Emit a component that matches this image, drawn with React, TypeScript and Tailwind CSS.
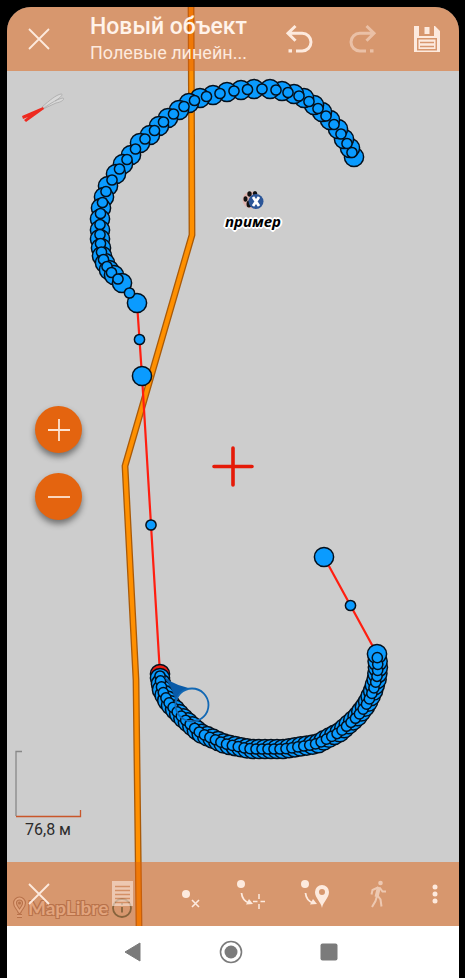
type Point = [number, number];

const UPPER_TRACK: Point[] = [
  [354, 157], [350, 148], [344, 139], [338, 129], [330, 120], [322, 112],
  [314, 105], [304, 98], [294, 94], [282, 91], [270, 89], [254, 89],
  [241, 90], [227, 92], [213, 95], [200, 98], [189, 103], [179, 110],
  [168, 118], [159, 126], [150, 135], [140, 143], [131, 155], [123, 164],
  [116, 174], [108, 186], [104, 197], [101, 208], [100, 219], [100, 230],
  [100, 239], [101, 248], [102, 256], [105, 263], [109, 270], [114, 275],
  [122, 283], [137, 303], [142, 376],
];

const LOWER_CURVE: Point[] = [
  [160, 678], [162, 690], [168, 702], [182, 717], [200, 733], [225, 744],
  [250, 749], [284, 749], [317, 744], [340, 732], [357, 717], [367, 704],
  [373, 691], [377, 678], [378, 666], [377, 654],
];

const ACTIVE_POINT: Point = [160, 674];
const LAST_POINT: Point = [324, 557];

// walks along the curve and drops a vertex every `step` pixels
function densify(points: Point[], step: number): Point[] {
  const result: Point[] = [points[0]];
  let rest = step;
  for (let i = 1; i < points.length; i++) {
    const [x1, y1] = points[i - 1];
    const [x2, y2] = points[i];
    const length = Math.hypot(x2 - x1, y2 - y1);
    let pos = rest;
    while (pos <= length) {
      const t = pos / length;
      result.push([x1 + (x2 - x1) * t, y1 + (y2 - y1) * t]);
      pos += step;
    }
    rest = pos - length;
  }
  result[result.length - 1] = points[points.length - 1];
  return result;
}

function midpoints(points: Point[]): Point[] {
  return points
    .slice(1)
    .map(([x, y], i) => [(x + points[i][0]) / 2, (y + points[i][1]) / 2]);
}

const lowerTrack = densify(LOWER_CURVE, 6);
const track: Point[] = [
  ...UPPER_TRACK,
  ACTIVE_POINT,
  ...lowerTrack,
  LAST_POINT,
];

function MapCanvas() {
  return (
    <svg
      className="absolute inset-0 size-full"
      viewBox="7 7 452 919"
      preserveAspectRatio="xMidYMid slice"
      aria-hidden="true"
    >
      <g fill="none" strokeLinejoin="round">
        <path
          d="M191 0 192 235 125 466 136 680 139 926"
          stroke="#a95a08"
          strokeWidth="6.8"
        />
        <path
          d="M191 0 192 235 125 466 136 680 139 926"
          stroke="#ff9000"
          strokeWidth="4.2"
        />
        <polyline
          points={track.map((p) => p.join(",")).join(" ")}
          stroke="#ff1e10"
          strokeWidth="2.2"
        />
      </g>
      <g fill="#0a9bff" stroke="#04101c" strokeWidth="1.5">
        {track.map(([x, y], i) => (
          <circle
            key={i}
            cx={x}
            cy={y}
            r="9.6"
            fill={i === UPPER_TRACK.length ? "#f01c10" : undefined}
          />
        ))}
        {midpoints(track).map(([x, y], i) => (
          <circle key={i} cx={x} cy={y} r="5.1" />
        ))}
      </g>

      {/* own position */}
      <path
        d="M164 677Q179 688 195 688.500A16.500 16.500 0 0 0 176 704Q174 690 164 677Z"
        fill="#0a5ba8"
      />
      <circle
        cx="192"
        cy="705"
        r="16.500"
        fill="none"
        stroke="#1268b4"
        strokeWidth="1.8"
      />

      {/* flare */}
      <path
        d="M42 107C50 100 56 95 61 94c3 0-1 4-6 7M43 109C52 102 58 99 63 98c2 1-1 4-7 5l-13 6"
        fill="#d9d9d9"
        stroke="#a8a8a8"
        strokeWidth=".8"
      />
      <path d="m22 116 21-9 1 2-18 13-2-2 4-3-5 2Z" fill="#ee2a20" />

      {/* centre mark */}
      <path
        d="M214 466.500H252M233 448V485"
        stroke="#e51a08"
        strokeWidth="3.600"
        strokeLinecap="round"
      />

      {/* scale */}
      <g fill="none" strokeWidth="1.300">
        <path d="M22 751.500H16V816" stroke="#888" />
        <path d="M16 816.500H80.500V810" stroke="#c9562a" />
      </g>
    </svg>
  );
}

function PlaceMarker() {
  return (
    <div className="absolute top-[184px] left-[206px] flex w-20 flex-col items-center">
      <svg width="22" height="20" viewBox="0 0 22 20" aria-hidden="true">
        <circle cx="9" cy="9" r="8.500" fill="#e9a59c" opacity=".6" />
        <g fill="#111">
          <ellipse cx="3.500" cy="8" rx="2" ry="2.800" />
          <ellipse cx="7.500" cy="3" rx="2.200" ry="2.800" />
          <ellipse cx="13" cy="2.500" rx="2.200" ry="2.500" />
          <ellipse cx="7" cy="13" rx="2.500" ry="3.500" />
        </g>
        <circle cx="14" cy="10.500" r="7.500" fill="#2c5698" />
        <path d="m11 6 6 9m0-9-6 9" stroke="#fff" strokeWidth="2.800" />
      </svg>
      <span className="text-[15px] leading-5 font-bold text-black italic [text-shadow:-1px_-1px_0_#fff,1px_-1px_0_#fff,-1px_1px_0_#fff,1px_1px_0_#fff,2px_0_0_#fff,-2px_0_0_#fff,0_2px_0_#fff,0_-2px_0_#fff] [font-family:'Open_Sans',sans-serif]">
        пример
      </span>
    </div>
  );
}

function MapLibreLogo() {
  return (
    <div className="absolute bottom-[6px] left-[5px] flex items-center">
      <svg width="15" height="24" viewBox="0 0 15 24" fill="none" aria-hidden="true">
        <g stroke="#8e8285" strokeWidth="4" strokeLinejoin="round">
          <path d="M7.500 16C6 12 3 11 3 7a4.500 4.500 0 0 1 9 0c0 4-3 5-4.500 9Z" />
          <path d="M5 20h5" />
        </g>
        <g stroke="#e2e6ea" strokeWidth="1.800" strokeLinejoin="round">
          <path d="M7.500 16C6 12 3 11 3 7a4.500 4.500 0 0 1 9 0c0 4-3 5-4.500 9Z" />
          <path d="M5 20h5" />
        </g>
        <circle cx="7.500" cy="7" r="1.500" fill="#8e8285" />
      </svg>
      <span className="ml-px text-[19px] leading-6 font-bold text-[#e2e6ea] [text-shadow:-1px_-1px_0_#8e8285,1px_-1px_0_#8e8285,-1px_1px_0_#8e8285,1px_1px_0_#8e8285] [font-family:Lato,sans-serif]">
        MapLibre
      </span>
      <svg className="ml-1" width="20" height="20" viewBox="0 0 20 20" fill="none" stroke="#2a6468" strokeWidth="1.800" aria-hidden="true">
        <circle cx="10" cy="10" r="9" />
        <path d="M10 9v5.500M10 5v2" />
      </svg>
    </div>
  );
}

function CloseIcon() {
  return (
    <svg width="22" height="22" viewBox="0 0 22 22" fill="none" stroke="#fdeade" strokeWidth="1.800" aria-hidden="true">
      <path d="m1 1 20 20M21 1 1 21" />
    </svg>
  );
}

function UndoIcon() {
  return (
    <svg width="28" height="30" viewBox="0 0 28 30" fill="none" stroke="currentColor" strokeWidth="3" aria-hidden="true">
      <path d="M10.500 2 3 9.300l7.500 7.400M3 9.300h14.200a8.800 8.800 0 0 1 0 17.600H11" />
      <path d="M3.500 26.900h3.500" strokeWidth="3.200" />
    </svg>
  );
}

function SaveIcon() {
  return (
    <svg width="26" height="26" viewBox="0 0 26 26" aria-hidden="true">
      <path
        fill="#fdeade"
        fillRule="evenodd"
        d="M0 0h5v10h15V0h1l5 5v21H0ZM3 12v12.500h20V12Z"
      />
      <path d="M10.500 1h5v7h-5Z" fill="#fdeade" />
      <path d="M4.500 13.500h17V23h-17Z" fill="#fdeade" />
      <path d="M6 16.500h14M6 20.500h14" stroke="#d8976f" strokeWidth="1.500" />
    </svg>
  );
}

function ZoomButton({ label, path }: { label: string; path: string }) {
  return (
    <button
      type="button"
      aria-label={label}
      className="flex size-[47px] items-center justify-center rounded-full bg-[#e4640f] shadow-[0_4px_6px_rgba(0,0,0,0.45)]"
    >
      <svg width="22" height="22" viewBox="0 0 22 22" stroke="#fde3d0" strokeWidth="1.800" aria-hidden="true">
        <path d={path} />
      </svg>
    </button>
  );
}

function TopBar() {
  return (
    <header className="relative flex h-16 items-center bg-[#e2620f]/50 text-[#fdeade]">
      <button type="button" aria-label="Закрыть" className="flex h-full w-16 shrink-0 items-center justify-center">
        <CloseIcon />
      </button>
      <div className="ml-[19px] shrink-0 whitespace-nowrap">
        <h1 className="text-[23px] leading-7 font-medium text-[#fff3ea]">
          Новый объект
        </h1>
        <p className="text-[18px] leading-6">Полевые линейн...</p>
      </div>
      <div className="flex h-full flex-1 items-center justify-end">
        <button type="button" aria-label="Отменить" className="flex h-full w-16 items-center justify-center">
          <UndoIcon />
        </button>
        <button type="button" aria-label="Повторить" className="flex h-full w-16 -scale-x-100 items-center justify-center opacity-50">
          <UndoIcon />
        </button>
        <button type="button" aria-label="Сохранить" className="flex h-full w-16 items-center justify-center">
          <SaveIcon />
        </button>
      </div>
    </header>
  );
}

function BottomBar() {
  const button = "flex h-full items-center justify-center";
  return (
    <footer className="relative flex h-16 items-center bg-[#e2620f]/50 text-[#fdeade]">
      <button type="button" aria-label="Отмена" className={`${button} w-16 shrink-0`}>
        <CloseIcon />
      </button>
      <div className="flex h-full flex-1 items-center justify-end">
        <button type="button" aria-label="Атрибуты" className={`${button} w-16`}>
          <svg width="22" height="26" viewBox="0 0 22 26" className="opacity-60" aria-hidden="true">
            <path d="M0 0h21v25H0Z" fill="#fdeade" />
            <path d="M3 5.500h15M3 9.500h15M3 13.500h15M3 17.500h15M3 21.500h15" stroke="#d38c62" strokeWidth="1.500" />
          </svg>
        </button>
        <button type="button" aria-label="Удалить точку" className={`${button} w-16`}>
          <svg width="30" height="30" viewBox="0 0 30 30" aria-hidden="true">
            <circle cx="14" cy="15" r="4" fill="#fdeade" />
            <path d="m20 21 7 7m0-7-7 7" stroke="#fdeade" strokeWidth="1.600" />
          </svg>
        </button>
        <button type="button" aria-label="Точка в центре карты" className={`${button} w-16`}>
          <svg width="32" height="32" viewBox="0 0 32 32" fill="none" stroke="#fdeade" aria-hidden="true">
            <circle cx="6" cy="6" r="4" fill="#fdeade" stroke="none" />
            <path d="M6.500 15c.5 5 3.500 8.500 7.500 10" strokeWidth="1.800" />
            <path d="m14 21 4 5-7 .500Z" fill="#fdeade" stroke="none" />
            <path d="M18 23.500h4.500M25.500 23.500H30M24 16v5M24 26v5" strokeWidth="1.500" />
          </svg>
        </button>
        <button type="button" aria-label="Точка по местоположению" className={`${button} w-16`}>
          <svg width="32" height="32" viewBox="0 0 32 32" fill="none" stroke="#fdeade" aria-hidden="true">
            <circle cx="6" cy="6" r="4" fill="#fdeade" stroke="none" />
            <path d="M6.500 15c.5 5 3.500 8.500 7.500 10" strokeWidth="1.800" />
            <path d="m14 21 4 5-7 .500Z" fill="#fdeade" stroke="none" />
            <path
              fill="#fdeade"
              stroke="none"
              fillRule="evenodd"
              d="M23 30c-1-6-7-10-7-16a7 7 0 0 1 14 0c0 6-6 10-7 16Zm0-19a3 3 0 1 0 0 6 3 3 0 0 0 0-6Z"
            />
          </svg>
        </button>
        <button type="button" aria-label="Запись трека" className={`${button} w-16`}>
          <svg width="20" height="28" viewBox="0 0 20 28" fill="none" stroke="#fdeade" className="opacity-60" aria-hidden="true">
            <circle cx="11.500" cy="3" r="2.300" fill="#fdeade" stroke="none" />
            <path d="M10 7 7.500 17" strokeWidth="4" />
            <path d="M9 7.500 3.500 10l-1 4.500M11 8l2.500 3.500H17M8 16l-1.500 5L3 27M8.500 15.500l3 4 1 7" strokeWidth="2" />
          </svg>
        </button>
        <button type="button" aria-label="Ещё" className={`${button} w-12`}>
          <svg width="6" height="20" viewBox="0 0 6 20" fill="#fdeade" aria-hidden="true">
            <circle cx="3" cy="3" r="2.500" />
            <circle cx="3" cy="10" r="2.500" />
            <circle cx="3" cy="17" r="2.500" />
          </svg>
        </button>
      </div>
    </footer>
  );
}

function SystemNav() {
  return (
    <nav className="flex h-[52px] items-center justify-center gap-[74px] bg-white pr-1 text-[#7b7b7b]">
      <button type="button" aria-label="Назад">
        <svg width="24" height="24" viewBox="0 0 24 24" fill="currentColor" aria-hidden="true">
          <path d="M4 12 19 3v18Z" stroke="currentColor" strokeLinejoin="round" />
        </svg>
      </button>
      <button type="button" aria-label="Домой">
        <svg width="24" height="24" viewBox="0 0 24 24" aria-hidden="true">
          <circle cx="12" cy="12" r="10.500" fill="none" stroke="currentColor" strokeWidth="1.600" />
          <circle cx="12" cy="12" r="6.500" fill="currentColor" />
        </svg>
      </button>
      <button type="button" aria-label="Недавние">
        <svg width="24" height="24" viewBox="0 0 24 24" fill="currentColor" aria-hidden="true">
          <rect x="3.500" y="3.500" width="17" height="17" rx="2" />
        </svg>
      </button>
    </nav>
  );
}

export default function App() {
  return (
    <div className="flex min-h-screen flex-col bg-black pt-[7px] pr-[6px] pl-[7px] [font-family:Roboto,sans-serif]">
      <div className="relative flex flex-1 flex-col overflow-hidden rounded-t-3xl bg-[#cdcdcd]">
        <MapCanvas />
        <PlaceMarker />
        <TopBar />
        <main className="relative flex flex-1 flex-col justify-between">
          <div className="mt-[335px] ml-[28px] flex flex-col items-start gap-5">
            <ZoomButton label="Приблизить" path="M0 11h22M11 0v22" />
            <ZoomButton label="Отдалить" path="M0 11h22" />
          </div>
          <p className="mb-5 ml-[18px] text-[16px] leading-6 text-[#2b2b2b]">
            76,8 м
          </p>
        </main>
        <MapLibreLogo />
        <BottomBar />
      </div>
      <SystemNav />
    </div>
  );
}
